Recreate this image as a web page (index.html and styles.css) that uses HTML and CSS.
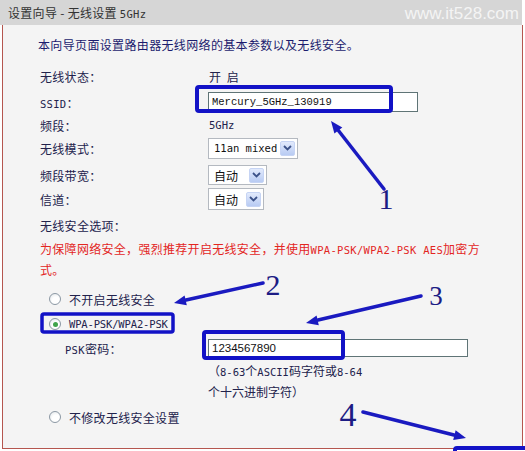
FILE: index.html
```html
<!DOCTYPE html>
<html lang="zh-CN">
<head>
  <meta charset="UTF-8">
  <title>设置向导 - 无线设置 5GHz</title>
  <link rel="stylesheet" href="styles.css">
</head>
<body>
<div class="page">
  <div class="title-bar">
    <span class="title">设置向导 - 无线设置 <span class="en">5GHz</span></span>
  </div>

  <div class="panel">
    <p class="intro">本向导页面设置路由器无线网络的基本参数以及无线安全。</p>

    <div class="row r-status">
      <span class="label">无线状态：</span>
      <span class="value spaced">开 启</span>
    </div>
    <div class="row r-ssid">
      <span class="label"><span class="en">SSID</span>：</span>
      <input class="textbox ssid" type="text" value="Mercury_5GHz_130919">
    </div>
    <div class="row r-band">
      <span class="label">频段：</span>
      <span class="value en">5GHz</span>
    </div>
    <div class="row r-mode">
      <span class="label">无线模式：</span>
      <div class="select s-mode">
        <span class="en">11an mixed</span>
        <span class="drop"><svg width="9" height="6" viewBox="0 0 9 6"><path d="M1 1 L4.5 4.5 L8 1" fill="none" stroke="#3c5289" stroke-width="1.8"/></svg></span>
      </div>
    </div>
    <div class="row r-width">
      <span class="label">频段带宽：</span>
      <div class="select s-width">
        <span>自动</span>
        <span class="drop"><svg width="9" height="6" viewBox="0 0 9 6"><path d="M1 1 L4.5 4.5 L8 1" fill="none" stroke="#3c5289" stroke-width="1.8"/></svg></span>
      </div>
    </div>
    <div class="row r-channel">
      <span class="label">信道：</span>
      <div class="select s-channel">
        <span>自动</span>
        <span class="drop"><svg width="9" height="6" viewBox="0 0 9 6"><path d="M1 1 L4.5 4.5 L8 1" fill="none" stroke="#3c5289" stroke-width="1.8"/></svg></span>
      </div>
    </div>

    <div class="row r-sec">
      <span class="label">无线安全选项：</span>
    </div>
    <p class="warn">为保障网络安全，强烈推荐开启无线安全，并使用<span class="en">WPA-PSK/WPA2-PSK AES</span>加密方<br>式。</p>

    <div class="choice c-off">
      <span class="radio"></span>
      <span>不开启无线安全</span>
    </div>
    <div class="choice c-wpa">
      <span class="radio checked"></span>
      <span class="en tight">WPA-PSK/WPA2-PSK</span>
    </div>
    <div class="row r-psk">
      <span class="label sub"><span class="en">PSK</span>密码：</span>
      <input class="textbox psk" type="text" value="1234567890">
    </div>
    <p class="hint">（<span class="en">8-63</span>个<span class="en">ASCII</span>码字符或<span class="en">8-64</span><br>个十六进制字符）</p>

    <div class="choice c-keep">
      <span class="radio"></span>
      <span>不修改无线安全设置</span>
    </div>
  </div>

  <!-- watermark and hand-drawn annotations laid over the screenshot -->
  <svg class="notes" width="525" height="451" viewBox="0 0 525 451">
    <text x="519" y="19" font-family="Liberation Sans, Arial, sans-serif" font-size="17" fill="#f4f4f4" text-anchor="end">www.it528.com</text>
    <g fill="none" stroke="#1212c6" stroke-linejoin="round">
      <rect x="197" y="87" width="194" height="24" rx="2" stroke-width="4"/>
      <rect x="42" y="314" width="131" height="18" rx="2" stroke-width="3.5"/>
      <rect x="204" y="332" width="139" height="26" rx="2" stroke-width="4"/>
      <rect x="455" y="448" width="72" height="10" rx="2" stroke-width="4"/>
    </g>
    <g stroke="#1a1ac0" stroke-width="3.5" stroke-linecap="round">
      <line x1="384" y1="189" x2="338" y2="130"/>
      <line x1="263" y1="283" x2="186" y2="300"/>
      <line x1="421" y1="296" x2="318" y2="320"/>
      <line x1="363" y1="412" x2="454" y2="435"/>
    </g>
    <g fill="#1a1ac0">
      <polygon points="331,121 342.3,127.4 334.4,133.6"/>
      <polygon points="174,303 186.8,305.3 184.6,295.5"/>
      <polygon points="306,323 318.8,325.2 316.6,315.4"/>
      <polygon points="466,438 455.6,430.2 453.2,440"/>
    </g>
    <g fill="#1c1c84" font-family="Liberation Serif, serif" text-anchor="middle">
      <text x="386" y="209" font-size="30">1</text>
      <text x="273" y="295" font-size="30">2</text>
      <text x="436" y="305" font-size="27">3</text>
      <text x="348" y="426" font-size="34">4</text>
    </g>
  </svg>
</div>
</body>
</html>
```

FILE: styles.css
```css
* {
  margin: 0;
  padding: 0;
  box-sizing: border-box;
}

body {
  background: #fff;
  font-family: "Noto Sans CJK SC", sans-serif;
  font-size: 12px;
  color: #22224c;
}

.en {
  font-family: "DejaVu Sans Mono", monospace;
  font-size: 10.5px;
}

.en.tight {
  letter-spacing: -0.15px;
}

.page {
  position: relative;
  width: 525px;
  height: 451px;
  overflow: hidden;
}

/* title bar */

.title-bar {
  width: 522px;
  height: 25px;
  background: #d6d6d6;
  display: flex;
  align-items: center;
  padding: 0 3px 0 8px;
}

.title {
  color: #333;
  letter-spacing: 0.3px;
}

/* panel */

.panel {
  margin-left: 2px;
  width: 521px;
  height: 424px;
  background: #f4f4f4;
  border: 1px solid #b5564f;
  border-top: none;
  padding: 10px 0 0 37px;
}

.intro {
  line-height: 20px;
  margin-left: -2px;
  color: #1c1c6e;
  letter-spacing: 0.35px;
}

.row {
  display: flex;
  align-items: center;
}

.label {
  width: 168px;
  flex: none;
  letter-spacing: 0.3px;
}

.label.sub {
  padding-left: 25px;
}

.value {
  padding-left: 1px;
}

.value.spaced {
  word-spacing: 3px;
}

.r-status { height: 22px; margin-top: 10px; }
.r-ssid { height: 30px; }
.r-band { height: 16px; }
.r-mode { height: 30px; }
.r-width { height: 24px; }
.r-channel { height: 24px; }
.r-sec { height: 28px; }
.r-psk { height: 26px; }

/* inputs */

.textbox {
  height: 20px;
  border: 1px solid #5f7476;
  background: #fff;
  padding: 0 3px;
  color: #111;
  outline: none;
}

.textbox.ssid {
  width: 210px;
  font-family: "Liberation Mono", monospace;
  font-size: 10.5px;
  line-height: 18px;
}

.textbox.psk {
  width: 260px;
  height: 18px;
  font-family: "Liberation Sans", Arial, sans-serif;
  font-size: 11.5px;
}

.select {
  display: flex;
  align-items: center;
  justify-content: space-between;
  height: 21px;
  border: 1px solid #b4b9c0;
  background: #fff;
  padding: 0 2px 0 5px;
  color: #111;
}

.s-mode { width: 90px; }
.s-width { width: 59px; height: 20px; }
.s-channel { width: 56px; height: 22px; }

.drop {
  width: 15px;
  height: 15px;
  border: 1px solid #c6d4f4;
  border-radius: 2px;
  background: linear-gradient(#e2eafc, #b8cbf3);
  display: flex;
  align-items: center;
  justify-content: center;
}

/* security section */

.warn {
  color: #e3261f;
  line-height: 20px;
  letter-spacing: 0.3px;
}

.choice {
  display: flex;
  align-items: center;
  gap: 8px;
  padding-left: 9px;
  letter-spacing: 0.3px;
}

.c-off { height: 20px; margin-top: 9px; }
.c-wpa { height: 22px; margin-top: 4px; }
.c-keep { height: 20px; margin-top: 6px; }

.radio {
  width: 12px;
  height: 12px;
  border-radius: 50%;
  border: 1px solid #8c98a4;
  background: radial-gradient(circle at 60% 65%, #fff 40%, #dde2e6 100%);
  display: flex;
  align-items: center;
  justify-content: center;
}

.radio.checked::after {
  content: "";
  width: 5px;
  height: 5px;
  border-radius: 50%;
  background: #3fa34a;
}

.hint {
  margin-left: 168px;
  line-height: 19px;
  color: #22224c;
}

.notes {
  position: absolute;
  top: 0;
  left: 0;
  pointer-events: none;
}
```
